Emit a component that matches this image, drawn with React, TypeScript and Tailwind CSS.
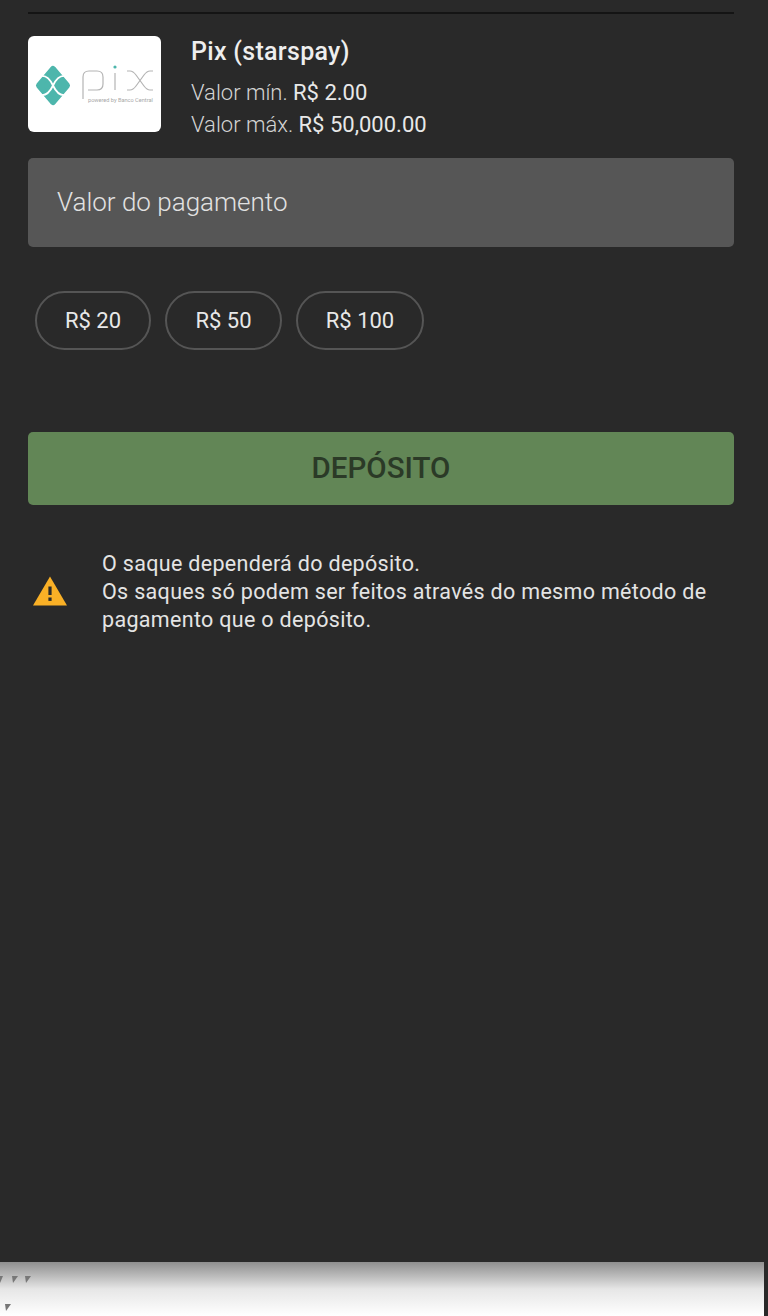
import React from 'react';

const font = { fontFamily: 'Roboto, sans-serif' };

function PixLogo() {
  return (
    <svg viewBox="0 0 133 96" className="w-[133px] h-[96px]">
      <path d="M25 33 L39 49.5 L25 66 L11 49.5 Z" fill="#4db6ac" stroke="#4db6ac" strokeWidth="6" strokeLinejoin="round" />
      <g fill="none" stroke="#ffffff" strokeWidth="1.8">
        <path d="M13 40 Q20 39 25 49.5 Q30 39 37 40" />
        <path d="M13 59 Q20 60 25 49.5 Q30 60 37 59" />
      </g>
      <g fill="none" stroke="#b4b4b4" strokeWidth="1.2">
        <path d="M55 63 V41 Q55 35 61 35 H69 Q75 35 75 41 V48 Q75 54 69 54 H60" />
        <path d="M87 37 V54 " />
        <path d="M99 35 H102 Q105 35 108 39 L116 50 Q119 54 122 54 H125" />
        <path d="M99 54 H102 Q105 54 108 50 L116 39 Q119 35 122 35 H125" />
      </g>
      <circle cx="87" cy="31" r="1.6" fill="#4db6ac" />
      <text x="60" y="66" fontSize="5.6" fill="#a8a8a8" fontFamily="Roboto, sans-serif">
        powered by Banco Central
      </text>
    </svg>
  );
}

function WarningIcon() {
  return (
    <svg viewBox="0 0 34 30" className="w-[34px] h-[30px] shrink-0">
      <path d="M17 0.5 L34 29.5 H0 Z" fill="#f9b026" />
      <rect x="15.4" y="10.5" width="3.2" height="8.5" fill="#2a2a2a" />
      <rect x="15.4" y="21.5" width="3.2" height="3.4" fill="#2a2a2a" />
    </svg>
  );
}

export default function App() {
  return (
    <div className="w-[768px] h-[1316px] flex bg-[#292929] overflow-hidden" style={font}>
      <div className="w-[764px] flex flex-col bg-white">
        <main className="h-[1262px] bg-[#292929] px-[28px] pt-[12px] text-[#e8e8e8]">
          <div className="w-[706px] border-t-2 border-[#141414]" />

          <div className="flex mt-[22px] w-[706px]">
            <div className="w-[133px] h-[96px] bg-white rounded-[6px] overflow-hidden">
              <PixLogo />
            </div>
            <div className="ml-[30px] flex flex-col">
              <div className="text-[25px] leading-[32px] tracking-[0.3px] font-medium text-[#eeeeee]">Pix (starspay)</div>
              <div className="mt-[9px] text-[22px] leading-[32px] font-light text-[#d4d4d4]">
                Valor mín. <span className="font-normal text-[#e8e8e8]">R$ 2.00</span>
              </div>
              <div className="text-[22px] leading-[32px] font-light text-[#d4d4d4]">
                Valor máx. <span className="font-normal text-[#e8e8e8]">R$ 50,000.00</span>
              </div>
            </div>
          </div>

          <div className="mt-[17px] w-[706px] h-[89px] bg-[#565656] rounded-[5px] pl-[29px] flex items-center text-[26px] font-light text-[#e2e2e2]">
            Valor do pagamento
          </div>

          <div className="mt-[44px] ml-[7px] flex gap-[14px]">
            <button className="w-[116px] h-[59px] rounded-full border-2 border-[#555555] text-[22px] text-[#e8e8e8]">R$ 20</button>
            <button className="w-[117px] h-[59px] rounded-full border-2 border-[#555555] text-[22px] text-[#e8e8e8]">R$ 50</button>
            <button className="w-[128px] h-[59px] rounded-full border-2 border-[#555555] text-[22px] text-[#e8e8e8]">R$ 100</button>
          </div>

          <button className="mt-[82px] w-[706px] h-[73px] bg-[#628656] rounded-[5px] text-[29.5px] font-medium text-[#2b3a27]">
            DEPÓSITO
          </button>

          <div className="mt-[45px] w-[706px] flex items-start">
            <div className="ml-[5px] mt-[26px]">
              <WarningIcon />
            </div>
            <p className="ml-[35px] text-[21.5px] tracking-[0.32px] leading-[28px] text-[#e4e4e4]">
              O saque dependerá do depósito.
              <br />
              Os saques só podem ser feitos através do mesmo método de pagamento que o depósito.
            </p>
          </div>
        </main>
        <div className="h-[54px] bg-gradient-to-b from-[#8f8f8f] via-[#e6e6e6] to-white">
          <svg viewBox="0 0 40 54" className="w-[40px] h-[54px]">
            <g fill="#777777">
              <path d="M0 14 H3 L0 21 Z" />
              <path d="M12 14 H18 L13 21 Z" />
              <path d="M25 14 H31 L26 21 Z" />
              <path d="M5 42 H11 L6 49 Z" />
            </g>
          </svg>
        </div>
      </div>
    </div>
  );
}
